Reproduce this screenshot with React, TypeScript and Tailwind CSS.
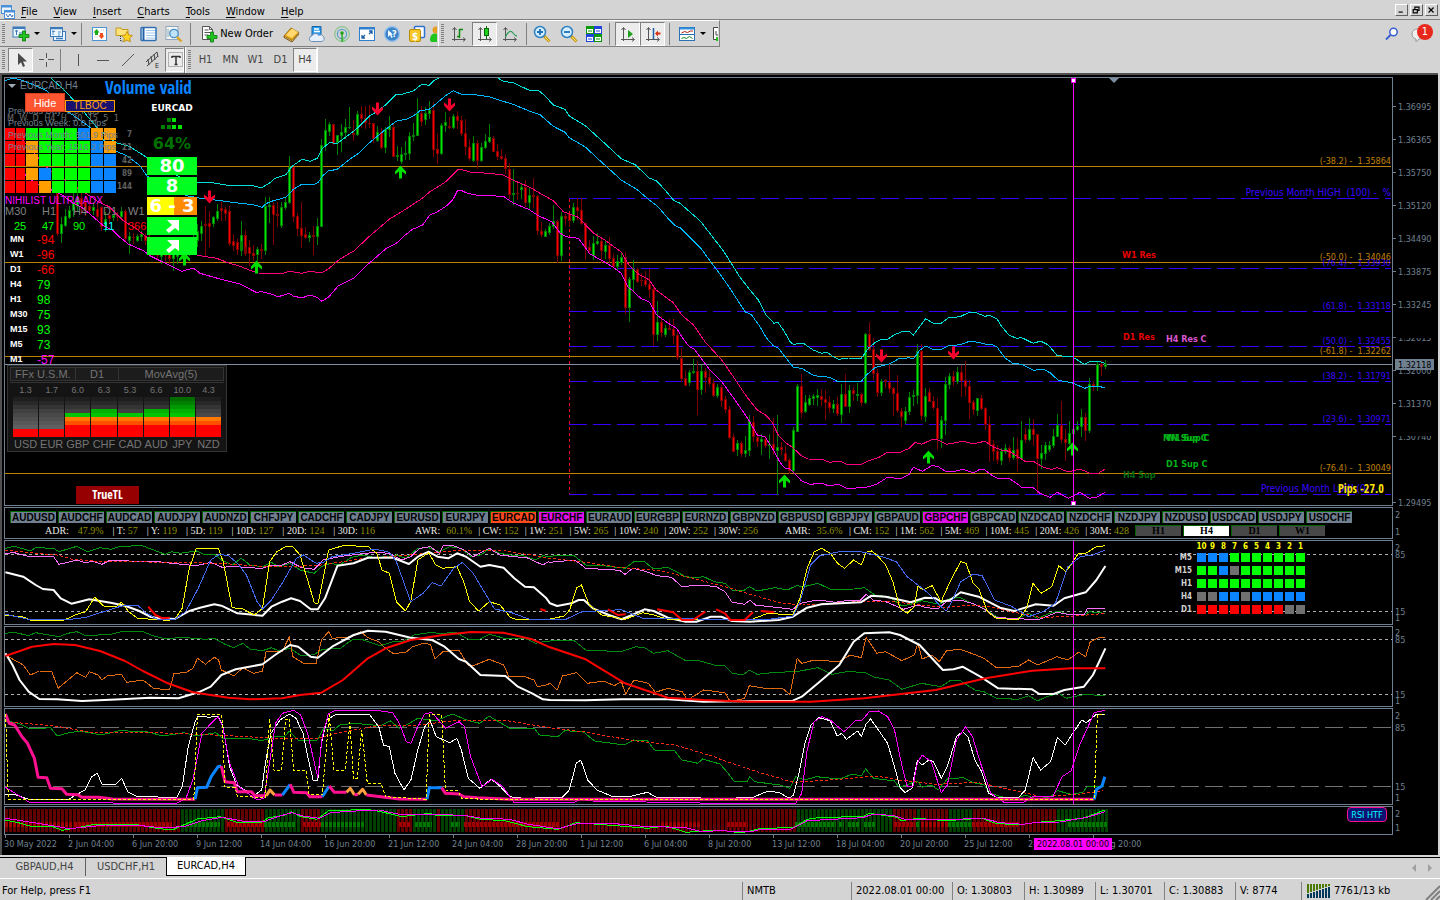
import React from "react";

type Tile = { x: number; y: number; sx: number; sy: number };
type Part = [Tile, string];

const LEFT: Tile = { x: 0, y: 74, sx: 3, sy: 3 };
const MID: Tile = { x: 240, y: 74, sx: 3, sy: 3 };
const RIGHT: Tile = { x: 620, y: 290, sx: 3, sy: 3 };
const OSC_A: Tile = { x: 0, y: 505, sx: 2.8, sy: 3 };
const OSC_B: Tile = { x: 550, y: 505, sx: 2.8, sy: 3 };
const LOW_A: Tile = { x: 0, y: 700, sx: 2.178, sy: 3 };
const LOW_B: Tile = { x: 720, y: 700, sx: 2.178, sy: 3 };

function place([t, pts]: Part) {
  return pts
    .trim()
    .split(/\s+/)
    .map((p) => {
      const [a, b] = p.split(",").map(Number);
      return `${(t.x + a / t.sx).toFixed(1)},${(t.y + b / t.sy).toFixed(1)}`;
    })
    .join(" ");
}

function Curve({ parts, color, w = 1, dash }: { parts: Part[]; color: string; w?: number; dash?: string }) {
  return (
    <polyline
      points={parts.map(place).join(" ")}
      fill="none"
      stroke={color}
      strokeWidth={w}
      strokeDasharray={dash}
      strokeLinejoin="round"
      shapeRendering={w === 1 ? "crispEdges" : "auto"}
    />
  );
}

/* ---------- price data: high,top,bottom,low + direction ---------- */
const candlesLeft =
  "350,357,480,485r 430,450,480,507g 405,425,455,460g 395,408,432,435g 350,385,412,430g 345,370,400,410g 350,372,400,420r 365,385,410,425r 380,395,410,420r 385,398,412,422g 390,405,430,440r 395,400,460,470r 415,435,460,475g 410,422,436,450r 420,424,432,440g 415,424,430,442r 400,412,430,438g 405,410,495,500r 475,485,500,540g 478,488,492,510r 480,487,500,505g 470,480,490,500g 478,486,500,512r 480,500,520,530r 500,510,530,545r 505,525,545,555r 520,530,550,570g 515,528,545,560r 530,540,556,570r 520,535,555,590g 510,530,548,570g 505,520,540,555g 500,515,540,560g 490,505,530,545g 480,490,520,535g 450,470,500,520g 440,455,480,500g 395,450,455,545r 410,448,460,520r 425,430,450,460g 390,410,435,440g 385,402,412,440r 400,405,420,440r 395,410,510,515r 480,500,515,530r 495,505,528,543r 440,500,530,545g 500,503,540,545r";
const candlesMid =
  "477,483,503,536g 468,483,522,543r 498,520,540,575r 513,537,545,560r 520,525,543,560g 510,524,530,555r 368,396,530,543g 368,393,398,447g 384,393,423,513r 384,420,426,459r 384,400,456,461g 370,384,402,408g 246,278,387,390g 278,280,428,444r 417,426,464,486r 384,462,486,521r 459,480,491,495r 474,484,492,503g 456,484,489,543r 432,457,488,513g 195,213,458,460g 135,168,216,231g 144,150,174,186g 150,150,210,213r 183,184,207,243g 150,174,186,234g 135,159,177,195g 99,159,162,165g 138,176,183,201r 111,120,183,186g 96,120,135,162r 96,132,148,165r 93,146,150,162r 147,147,195,207r 156,174,201,204g 162,174,222,226r 159,165,222,237g 126,155,168,189g 150,160,248,249r 216,244,249,261g 219,240,264,270g 201,236,243,258g 174,185,240,258g 147,182,189,201g 72,118,185,186g 96,117,144,156r 99,117,138,153g 81,108,120,135g 84,108,227,249r 180,225,240,270r 147,153,240,243g 114,144,156,174g 129,156,163,165r 120,126,162,165g 111,126,140,165r 126,138,180,186r 135,176,220,243r 195,219,255,261r 186,207,261,264g 198,207,261,285r 207,219,261,264g 180,201,222,225g 150,190,204,207g 186,192,234,235r 210,231,249,258r 225,246,256,258r 240,252,286,300r 267,285,363,375r 285,357,363,393g 324,357,360,378r 330,339,347,375g 318,340,387,399r 342,363,387,405g 312,364,369,402r 363,366,472,483r 444,471,484,489r 465,471,488,489g 447,456,477,483g 393,441,459,465g 438,441,546,567r 414,426,546,561g 420,426,435,456r 420,421,441,459r 387,399,441,447g 372,399,411,438r 372,408,450,452r 444,447,522,558r 498,519,531,540r 486,507,546,558g 477,501,510,513g 489,501,531,567r 501,513,534,555g 489,513,555,567r 540,552,579,582r 543,561,579,591g 534,549,567,573g 534,549,702,720r 609,615,702,744g 558,585,618,654g 582,585,624,627r 597,618,621,636r 591,618,633,639r 585,630,648,672r 639,645,783,816r 681,744,783,801g 726,744,777,789r 753,762,783,789g 735,762,768,768r 735,765,786,810r 765,783,852,858r";
const candlesRight =
  "174,203,267,276r 240,264,288,288r 240,246,279,288g 207,244,249,252g 213,244,299,375r 225,243,300,315g 234,243,264,309r 240,261,282,288r 267,279,318,320r 282,291,318,324g 285,291,333,351r 318,327,360,369r 348,357,444,447r 432,441,486,486r 450,459,480,498g 453,459,492,500r 438,480,492,500g 375,393,483,498g 378,396,441,456r 426,440,456,471r 432,447,456,495g 438,448,468,474r 432,462,467,507g 384,462,480,495r 375,471,483,614g 456,471,480,495r 468,489,513,516r 504,510,543,552r 411,420,543,546g 282,288,426,426g 252,289,369,384r 315,336,366,369g 315,324,345,347g 312,318,327,345g 297,315,323,348g 297,318,330,347r 300,327,339,390r 318,336,354,369r 330,342,357,369g 321,342,372,378r 282,312,375,399g 252,312,350,351r 285,300,350,369g 291,300,312,333r 279,312,318,333g 309,312,339,348r 129,132,339,342g 96,132,180,183r 144,177,252,270r 237,249,309,321r 267,273,309,318g 267,269,276,294r 222,276,297,309r 291,294,312,378r 255,309,363,369r 354,363,381,411r 351,363,393,402g 306,321,366,375g 300,315,321,348g 162,183,318,342g 162,183,378,390r 294,318,381,396g 294,306,336,336r 318,333,354,360r 324,354,447,480r 378,390,447,474g 261,282,393,435g 249,258,285,297g 243,258,276,288r 231,246,276,282g 225,246,273,321r 213,270,291,318r 270,288,339,387r 330,336,360,375r 324,324,363,378g 315,324,357,360r 351,354,405,420r 378,402,465,516r 450,462,486,513r 465,483,510,522r 474,483,513,525g 462,474,486,492g 468,474,504,516r 441,480,504,510g 444,477,507,543r 393,450,507,510g 414,432,450,459r 384,417,450,453g 387,417,435,468r 432,432,507,612r 465,489,507,537g 456,465,492,510g 453,465,480,486g 417,438,468,474g 372,405,441,441g 333,405,450,459r 417,447,459,513r 393,429,462,465g 417,417,432,441g 393,408,420,423g 357,381,411,441g 369,381,423,453r 264,282,423,429g 273,282,291,303r 216,222,291,303g 210,222,231,258r 210,222,231,237g";

function Candles({ data, x0, y0 }: { data: string; x0: number; y0: number }) {
  return (
    <g shapeRendering="crispEdges">
      {data.split(" ").map((c, i) => {
        const up = c.endsWith("g");
        const [h, t, b, l] = c.slice(0, -1).split(",").map((v) => Math.round(y0 + Number(v) / 3));
        const x = x0 + i * 4;
        const height = Math.max(b - t, 1);
        return (
          <g key={i}>
            <rect x={x} y={h} width={1} height={Math.max(l - h, 1)} fill={up ? "#008000" : "#800000"} />
            <rect x={x - 1} y={t} width={3} height={height} fill={up ? "#008000" : "#800000"} />
            {height > 2 && <rect x={x} y={t + 1} width={1} height={height - 2} fill={up ? "#00e600" : "#ff0000"} />}
          </g>
        );
      })}
    </g>
  );
}

const TAHOMA = "font-['DejaVu_Sans_Condensed','DejaVu_Sans',sans-serif]";
const ARIAL = "font-['Liberation_Sans',Arial,sans-serif]";
const NARROW = "font-['Open_Sans_Condensed','Roboto_Condensed','Liberation_Sans',sans-serif]";

const gold = "#c08000";
const indigo = "#3a00ff";
const slate = "#708090";

/* ---------- toolbar icons ---------- */
function Ico({ children, w = 16 }: { children: React.ReactNode; w?: number }) {
  return (
    <svg width={w} height="18" viewBox={`0 0 ${w} 18`} fill="none" aria-hidden="true">
      {children}
    </svg>
  );
}
const Axes = () => <path d="M3.5 3v13M1 14.5h13M1.5 5l2-2.500 2 2.500M12 12.500l2.500 2-2.500 2" stroke="#555" />;
const Plus = ({ x, y }: { x: number; y: number }) => (
  <path transform={`translate(${x} ${y})`} d="M3.500 0h3v3.500h3.500v3h-3.500v3.500h-3v-3.500h-3.500v-3h3.500z" fill="#1fc41f" stroke="#0a7a0a" strokeWidth=".8" />
);
const I = {
  newChart: (
    <Ico w={18}>
      <rect x="1" y="2" width="12" height="10" fill="#eaf5ff" stroke="#3a7ab8" />
      <path d="M1 3h12" stroke="#3a7ab8" strokeWidth="2" />
      <path d="M3 6h3M4.500 5v5M7 8h4" stroke="#3a7ab8" />
      <Plus x={7} y={6} />
    </Ico>
  ),
  profiles: (
    <Ico w={18}>
      <rect x="4.500" y="6.500" width="12" height="9" fill="#eaf5ff" stroke="#3a7ab8" />
      <rect x="1.500" y="2.500" width="12" height="9" fill="#eaf5ff" stroke="#3a7ab8" />
      <path d="M1 3.500h13M7 13.500h7" stroke="#3a7ab8" strokeWidth="1.500" />
      <path d="M4 5v5M3 6.500h3M10 8v3M12 7h-3" stroke="#5b93c6" />
    </Ico>
  ),
  market: (
    <Ico>
      <rect x="1.500" y="2.500" width="14" height="13" fill="#fff" stroke="#4a94d8" />
      <path d="M5.500 4l3 3.500h-1.500v2.500h-3V7.500H2.500z" fill="#18a818" />
      <path d="M10.500 14l3-3.500h-1.500V8h-3v2.500H7.500z" fill="#f05020" />
      <path d="M10 5h3M3.500 12h3" stroke="#bbb" strokeDasharray="1 1" />
    </Ico>
  ),
  navigator: (
    <Ico w={18}>
      <path d="M1 3h5l1 1.500h6v6H1z" fill="#ffe27a" stroke="#c09a20" />
      <path d="M5.500 11v5h3" stroke="#333" strokeDasharray="1 1" />
      <path d="M12 6.500l1.700 3.500 3.800.5-2.800 2.600.7 3.800-3.400-1.800-3.400 1.800.7-3.800L6.500 10.500l3.800-.5z" fill="#ffd21f" stroke="#b8860b" strokeWidth=".8" />
    </Ico>
  ),
  terminal: (
    <Ico w={17}>
      <rect x="1" y="2.500" width="15" height="13" rx="1" fill="#fff" stroke="#2c6fb4" strokeWidth="1.500" />
      <path d="M3.500 3v12" stroke="#1f5fa8" strokeWidth="2" />
      <path d="M6 5.500h9M6 8h9M6 10.500h9M6 13h9" stroke="#9ec8f0" />
    </Ico>
  ),
  tester: (
    <Ico w={18}>
      <rect x="1" y="1.500" width="12" height="13" fill="#f6f6f6" stroke="#8fa6bd" />
      <path d="M3 4v8M5 6v5M10 4v5" stroke="#8aa" />
      <circle cx="9" cy="8.500" r="4.200" fill="#bfe3fa" stroke="#4a8fc6" strokeWidth="1.300" />
      <path d="M12 12l4.500 4.500" stroke="#d8a520" strokeWidth="2.400" />
    </Ico>
  ),
  order: (
    <Ico w={18}>
      <path d="M2.500 1.500h7l3 3v10h-10z" fill="#fff" stroke="#555" />
      <path d="M9.500 1.500v3h3M4.500 5h4M4.500 7.500h6M4.500 10h4" stroke="#555" />
      <Plus x={7} y={7} />
    </Ico>
  ),
  book: (
    <Ico w={18}>
      <path d="M1 11l7-8 8 4.500-7 8z" fill="#e8a818" stroke="#8a5a00" strokeWidth=".8" />
      <path d="M3 10l6-6.500 6 3.500-6 6z" fill="#ffd870" />
      <path d="M1 11v1.500l8 4.500 7-8" stroke="#8a5a00" />
    </Ico>
  ),
  cloud: (
    <Ico w={18}>
      <path d="M4 1.500h9v10H4z" fill="#2e9cf0" stroke="#1565a8" />
      <path d="M6 4h5M6 6.500h6" stroke="#fff" strokeWidth="1.500" />
      <path d="M3.500 16.500a2.800 2.800 0 01.3-5.500 4 4 0 017-.7 3.200 3.200 0 013.500 6.200z" fill="#e6effa" stroke="#6d8db5" />
    </Ico>
  ),
  signal: (
    <Ico w={18}>
      <circle cx="9" cy="9" r="7.300" stroke="#8cc48c" strokeWidth="1.200" />
      <circle cx="9" cy="9" r="4.600" stroke="#5aa0c8" strokeWidth="1.300" />
      <path d="M9 8l3 9H9z" fill="#7ccf7c" />
      <circle cx="9" cy="8" r="1.800" fill="#1fa01f" />
      <path d="M9 9v8" stroke="#1fa01f" strokeWidth="1.200" />
    </Ico>
  ),
  full: (
    <Ico w={18}>
      <rect x="1.500" y="2.500" width="15" height="13" fill="#fff" stroke="#2f7fd0" />
      <path d="M1.500 3.500h15" stroke="#2f7fd0" strokeWidth="2" />
      <path d="M4 13l3-3M4 10v3h3M14 6l-3 3M11 6h3v3" stroke="#1f5fa8" strokeWidth="1.300" />
    </Ico>
  ),
  help: (
    <Ico w={18}>
      <circle cx="9" cy="9" r="7.500" fill="#3d86cc" stroke="#9cc4ea" strokeWidth="1.500" />
      <path d="M5 5v7l2-2 1.500 3 1.200-.7L8.300 9.500H10z" fill="#fff" />
      <text x="9" y="12" fontSize="9" fontWeight="bold" fill="#fff">?</text>
    </Ico>
  ),
  dollar: (
    <Ico w={18}>
      <rect x="6.500" y="1.500" width="10" height="11" rx="1" fill="#fff" stroke="#2f6fd0" strokeWidth="1.500" />
      <rect x="1.500" y="4.500" width="11" height="12" rx="1.500" fill="#f6c828" stroke="#b88a00" />
      <text x="4" y="14.500" fontSize="10" fontWeight="bold" fill="#fff">$</text>
    </Ico>
  ),
  person: (
    <Ico w={7}>
      <circle cx="6" cy="5" r="3.500" fill="#e8a020" />
      <path d="M0 15a5 6 0 017-6v8H1z" fill="#1fc41f" />
    </Ico>
  ),
  bars: <Ico><Axes /><path d="M8.500 4v9M6 11.500h2.500M8.500 4.500H12" stroke="#0a8a0a" strokeWidth="1.500" /></Ico>,
  candle: <Ico><Axes /><path d="M9.500 1v13" stroke="#0a6a0a" /><rect x="7.500" y="3.500" width="4" height="7" fill="#1fd01f" stroke="#0a6a0a" /></Ico>,
  line: <Ico><Axes /><path d="M3.500 12C6 6 9 5 11 8s3 3 4 3" stroke="#2fa05a" strokeWidth="1.300" /></Ico>,
  zoomIn: (
    <Ico w={18}>
      <path d="M11 11l5.500 5.500" stroke="#c89a10" strokeWidth="3" /><path d="M12 12l4 4" stroke="#ffe26a" />
      <circle cx="7" cy="7" r="5.500" fill="#d4efff" stroke="#2f7fc0" strokeWidth="1.500" /><path d="M4 7h6M7 4v6" stroke="#1f6fb4" strokeWidth="1.800" />
    </Ico>
  ),
  zoomOut: (
    <Ico w={18}>
      <path d="M11 11l5.500 5.500" stroke="#c89a10" strokeWidth="3" /><path d="M12 12l4 4" stroke="#ffe26a" />
      <circle cx="7" cy="7" r="5.500" fill="#d4efff" stroke="#2f7fc0" strokeWidth="1.500" /><path d="M4 7h6" stroke="#1f6fb4" strokeWidth="1.800" />
    </Ico>
  ),
  tiles: (
    <Ico w={18}>
      {[[1, 1, "#0a9a0a"], [9, 1, "#2244dd"], [1, 9, "#2244dd"], [9, 9, "#0a9a0a"]].map(([x, y, c], i) => (
        <g key={i}>
          <rect x={x as number} y={y as number} width="8" height="8" fill={c as string} />
          <rect x={(x as number) + 1} y={(y as number) + 3} width="6" height="4" fill="#fff" />
          <path d={`M${(x as number) + 2} ${(y as number) + 5}h4`} stroke={c as string} />
        </g>
      ))}
    </Ico>
  ),
  scroll: <Ico><Axes /><path d="M8 5l5 4-5 4z" fill="#1fa01f" /></Ico>,
  shift: <Ico><Axes /><path d="M8.500 3v11" stroke="#1f5fa8" strokeWidth="1.500" /><path d="M10 8.500l3-3v2h2.500v2H13v2z" fill="#d83010" /></Ico>,
  indicators: (
    <Ico w={18}>
      <rect x="1.500" y="2.500" width="15" height="13" fill="#fff" stroke="#2f6fb4" /><path d="M1.500 3.500h15" stroke="#2f8fe0" strokeWidth="2" />
      <path d="M2 9.500h14" stroke="#2f6fb4" /><path d="M3.500 8l3-1.500 3 1 3-1.500H15" stroke="#b02010" /><path d="M3.500 13.500l2.500-1 2.500 1 3-2 3 2" stroke="#109020" />
    </Ico>
  ),
  template: <Ico w={6}><path d="M6 2.500H1.500v12H6" fill="#fff" stroke="#444" /><path d="M4 6v4h2" stroke="#444" /><rect x="4" y="12" width="2" height="4" fill="#1fc41f" /></Ico>,
  cursor: <Ico><path d="M5 2v12l3-2.700 2 4.700 2-1-2-4.500h4z" fill="#4a4a4a" /></Ico>,
  cross: <Ico><path d="M8 1.500v5.500M8 10.500V16M.5 8.500H6M10 8.500h5.500" stroke="#555" shapeRendering="crispEdges" /></Ico>,
  vline: <Ico><path d="M8.500 3v12" stroke="#555" shapeRendering="crispEdges" /></Ico>,
  hline: <Ico><path d="M2 9.500h12" stroke="#555" shapeRendering="crispEdges" /></Ico>,
  trend: <Ico><path d="M2 15L14 3" stroke="#555" /></Ico>,
  channel: (
    <Ico>
      <path d="M1 11L12 1M2 15L13 5M3 8l1 6M6 5l1 6M9 3l1 6M12 1l1 5" stroke="#444" />
      <text x="10" y="17" fontSize="7" fill="#222">E</text>
    </Ico>
  ),
  label: (
    <Ico>
      <rect x="1.500" y="1.500" width="14" height="14" stroke="#777" strokeDasharray="1 1" /><path d="M5 5.500h8M9 5v9M7.500 13.500h3M5 5v2M13 5v2" stroke="#333" strokeWidth="1.500" />
    </Ico>
  ),
};

const Grip = () => <span className="mx-[2px] h-5 w-[3px] shrink-0 bg-[repeating-linear-gradient(#808080_0_1px,#d4d4d4_1px_2px)]" />;
const Sep = () => <span className="h-[22px] w-px shrink-0 bg-[#808080]" />;
const Caret = () => <span className="h-0 w-0 border-x-[3px] border-t-[3px] border-x-transparent border-t-black" />;

function Tool({ label, pressed, children, caret, cls = "w-[25px]" }: { label: string; pressed?: boolean; children: React.ReactNode; caret?: boolean; cls?: string }) {
  return (
    <button
      aria-label={label}
      className={`${cls} flex h-6 shrink-0 items-center justify-center gap-1 overflow-hidden ${
        pressed ? "border border-[#808080] border-r-white border-b-white bg-[#ececec]" : ""
      }`}
    >
      {children}
      {caret && <Caret />}
    </button>
  );
}

function MenuBar() {
  const items: [string, string][] = [
    ["File", "ml-[5px]"], ["View", "ml-4"], ["Insert", "ml-4"], ["Charts", "ml-4"], ["Tools", "ml-4"], ["Window", "ml-4"], ["Help", "ml-4"],
  ];
  return (
    <header className="flex h-[19px] items-center pt-1">
      <svg width="16" height="16" viewBox="0 0 16 16" fill="none" aria-hidden="true">
        <rect x="1.500" y="1.500" width="10" height="8" fill="#eaf5ff" stroke="#4a90d8" />
        <rect x="4.500" y="6.500" width="10" height="8" fill="#fff" stroke="#4a90d8" />
        <path d="M1 2.500h11M4 7.500h11" stroke="#4a90d8" strokeWidth="2" />
        <path d="M6 10l2 3 2-3 2 3 1-2" stroke="#3070c0" />
      </svg>
      <nav className="flex">
        {items.map(([t, m]) => (
          <button key={t} className={m}>
            <span className="underline underline-offset-2">{t[0]}</span>
            {t.slice(1)}
          </button>
        ))}
      </nav>
      <div className="mr-[2px] mb-1 ml-auto flex gap-[2px]">
        {["M2 8.500h5", "M3.500 5v-2.500h5v4H7M1.500 5.500h5v4h-5z", "M2 3l6 6M8 3l-6 6"].map((d, i) => (
          <button key={i} aria-label={["Minimize", "Restore", "Close"][i]} className="h-[12px] w-[13px] border border-white border-r-[#606060] border-b-[#606060]">
            <svg width="11" height="10" viewBox="0 0 11 12" aria-hidden="true"><path d={d} fill="none" stroke="#000" strokeWidth="1.400" /></svg>
          </button>
        ))}
      </div>
    </header>
  );
}

function Toolbars() {
  return (
    <>
      <div className="flex h-[28px] items-center border-t border-[#808080]">
        <div className="flex h-[27px] items-center border-t border-r border-b border-white border-b-[#808080]">
          <Grip />
          <Tool label="New chart" caret cls="w-[37px]">{I.newChart}</Tool>
          <Tool label="Profiles" caret cls="w-[37px]">{I.profiles}</Tool>
          <Sep />
          <span className="w-[4px]" />
          <Tool label="Market watch">{I.market}</Tool>
          <Tool label="Navigator">{I.navigator}</Tool>
          <Tool label="Terminal">{I.terminal}</Tool>
          <Tool label="Strategy tester">{I.tester}</Tool>
          <span className="w-[4px]" />
          <Sep />
          <button className="flex h-6 w-[88px] items-center justify-end gap-[2px] whitespace-nowrap pr-[6px]">{I.order}New Order</button>
          <Tool label="MetaEditor">{I.book}</Tool>
          <Tool label="Hosting">{I.cloud}</Tool>
          <Tool label="Signals">{I.signal}</Tool>
          <Tool label="Full screen">{I.full}</Tool>
          <Tool label="Help">{I.help}</Tool>
          <Tool label="Market">{I.dollar}</Tool>
          <Tool label="Auto trading" cls="w-[9px]">{I.person}</Tool>
        </div>
        <div className="flex h-[27px] items-center border-t border-r border-b border-white border-r-[#808080] border-b-[#808080]">
          <Grip />
          <Tool label="Bar chart" cls="w-[26px]">{I.bars}</Tool>
          <Tool label="Candlesticks" pressed>{I.candle}</Tool>
          <Tool label="Line chart">{I.line}</Tool>
          <span className="w-1" />
          <Sep />
          <Tool label="Zoom in" cls="w-[29px]">{I.zoomIn}</Tool>
          <Tool label="Zoom out">{I.zoomOut}</Tool>
          <Tool label="Tile windows">{I.tiles}</Tool>
          <span className="w-[3px]" />
          <Sep />
          <span className="w-[5px]" />
          <Tool label="Auto scroll" pressed>{I.scroll}</Tool>
          <Tool label="Chart shift" pressed>{I.shift}</Tool>
          <span className="w-1" />
          <Sep />
          <span className="w-[3px]" />
          <Tool label="Indicators" caret cls="w-[37px]">{I.indicators}</Tool>
          <Tool label="Templates" cls="w-[9px]">{I.template}</Tool>
        </div>
        <div className="ml-auto flex items-center gap-3 pr-[7px]">
          <button aria-label="Search">
            <svg width="14" height="14" viewBox="0 0 14 14" fill="none"><circle cx="8.500" cy="5" r="3.700" fill="#fff" stroke="#3a5fd0" strokeWidth="1.500" /><path d="M5.500 8L1 12.500" stroke="#3a5fd0" strokeWidth="2" /></svg>
          </button>
          <button aria-label="Notifications" className="relative h-[22px] w-[22px]">
            <svg width="22" height="22" viewBox="0 0 22 22" fill="none"><path d="M1 11c0-3 2-5 6-5s7 2 7 5-3 5-6 5l-3 3v-3c-3-1-4-2-4-5z" fill="#eee" stroke="#999" /></svg>
            <span className="absolute top-[1px] right-0 flex h-4 w-4 items-center justify-center rounded-full bg-[#e8281c] text-[11px] text-white">1</span>
          </button>
        </div>
      </div>
      <div className="flex h-[26px] items-center text-[#444]">
        <div className="flex h-[26px] items-center border-r border-[#808080]">
          <Grip />
          <span className="w-px" />
          <Tool label="Cursor" pressed>{I.cursor}</Tool>
          <Tool label="Crosshair">{I.cross}</Tool>
          <span className="w-[2px]" />
          <Sep />
          <span className="w-1" />
          <Tool label="Vertical line">{I.vline}</Tool>
          <Tool label="Horizontal line">{I.hline}</Tool>
          <Tool label="Trendline">{I.trend}</Tool>
          <Tool label="Equidistant channel">{I.channel}</Tool>
          <Tool label="Text label" pressed cls="w-[19px]">{I.label}</Tool>
        </div>
        <div className="flex h-[26px] items-center border-r border-l border-white">
          <Grip />
          {["H1", "MN", "W1", "D1"].map((t) => (
            <button key={t} className="h-6 w-[25px] text-[11px]">{t}</button>
          ))}
          <button className="h-6 w-[24px] border border-[#808080] border-r-white border-b-white bg-[#ececec] text-[11px]">H4</button>
        </div>
      </div>
    </>
  );
}

/* ---------- panes ---------- */
const Levels = ({ ys, dash, color }: { ys: number[]; dash: string; color: string }) => (
  <g shapeRendering="crispEdges">
    {ys.map((y) => (
      <line key={y} x1={5} x2={1392} y1={y + 0.5} y2={y + 0.5} stroke={color} strokeDasharray={dash} />
    ))}
  </g>
);
const Crosshair = ({ y1, y2 }: { y1: number; y2: number }) => <line x1={1073.5} x2={1073.5} y1={y1} y2={y2} stroke="#ff00ff" shapeRendering="crispEdges" />;

function Pane({ top, cls, ticks, children, overlay }: { top: number; cls: string; ticks: [number, string][]; children?: React.ReactNode; overlay?: React.ReactNode }) {
  return (
    <section className={`${cls} flex`}>
      <div className="relative min-w-0 flex-1 overflow-hidden border border-[#708090]">
        <svg className={`${TAHOMA} block h-full w-full`} aria-hidden={children ? undefined : true}>
          <g transform={`translate(-5 ${-(top + 1)})`}>{children}</g>
        </svg>
        {overlay}
      </div>
      <svg className={`${TAHOMA} h-full w-[45px] overflow-visible text-[9px]`}>
        <g transform={`translate(-1393 ${-top})`} fill={slate}>
          {ticks.map(([y, t]) => (
            <text key={t} x={top === 77 ? 1398 : 1395} y={y + 4}>{t}</text>
          ))}
          {top === 77 && (
            <>
              {ticks.map(([y]) => <rect key={y} x={1393} y={y} width={3} height={1} />)}
              <rect x={1397} y={333} width={36} height={5} fill="#000" />
              <rect x={1397} y={432} width={36} height={4} fill="#000" />
              <rect x={1395} y={359} width={39} height={11} />
              <text x={1398} y={368} fill="#000">1.32118</text>
            </>
          )}
        </g>
      </svg>
    </section>
  );
}

const DownArrow = ({ x, y }: { x: number; y: number }) => (
  <path transform={`translate(${x} ${y})`} d="M-1.500 -7h3v7l4-3v3l-5.500 6-5.500-6v-3l4 3z" fill="#f5002c" />
);
const UpArrow = ({ x, y }: { x: number; y: number }) => (
  <path transform={`translate(${x} ${y})`} d="M-1.500 7h3v-7l4 3v-3l-5.500-6-5.500 6v3l4-3z" fill="#00e000" />
);

const fibs: [number, string, string][] = [
  [166, "(-38.2) -\u00a0\u00a01.35864", gold],
  [268, "(76.4) -\u00a0\u00a01.33930", indigo],
  [262, "(-50.0) -\u00a0\u00a01.34046", gold],
  [311, "(61.8) -\u00a0\u00a01.33118", indigo],
  [346, "(50.0) -\u00a0\u00a01.32455", indigo],
  [356, "(-61.8) -\u00a0\u00a01.32262", gold],
  [381, "(38.2) -\u00a0\u00a01.31791", indigo],
  [424, "(23.6) -\u00a0\u00a01.30971", indigo],
  [473, "(-76.4) -\u00a0\u00a01.30049", gold],
];

function PriceChart() {
  return (
    <>
      <g shapeRendering="crispEdges">
        {[198, 268, 311, 346, 381, 424, 494].map((y) => (
          <line key={y} x1={569} x2={1391} y1={y + 0.5} y2={y + 0.5} stroke={indigo} strokeDasharray="18 6" />
        ))}
        <line x1={569.5} x2={569.5} y1={199} y2={494} stroke="#ff0020" strokeDasharray="3 3" />
        {[166, 262, 356, 473].map((y) => (
          <line key={y} x1={5} x2={1391} y1={y + 0.5} y2={y + 0.5} stroke={gold} />
        ))}
        <line x1={5} x2={1392} y1={364.5} y2={364.5} stroke="#8090a4" />
      </g>
      <Candles data={candlesLeft} x0={57} y0={74} />
      <Candles data={candlesMid} x0={241} y0={74} />
      <Candles data={candlesRight} x0={681} y0={290} />
      <Curve color="#00e0d8" parts={[[LEFT, "150,10 195,50 240,100 290,160 345,205 390,218 440,250 500,290 560,318 597,325 630,325 660,330 690,335 720,334"], [MID, "35,334 64,342 90,326 103,314 138,302 155,278 185,256 210,262 232,253 246,225 268,206 292,208 330,180 355,160 390,125 412,112 438,92 470,60 488,60 520,51 545,31 568,34 582,20 597,12 640,-20 740,-15 773,12 790,22 822,27 868,49 895,49 915,65 940,93 975,106 988,126 1036,155 1080,195 1144,254 1185,272 1228,312 1250,321 1275,348 1300,378 1320,388 1380,440 1450,530 1500,610"], [RIGHT, "390,0 415,30 438,75 462,100 474,97 492,123 510,155 520,163 550,160 580,180 605,190 620,186 640,200 655,208 685,204 724,205 745,175 765,158 785,148 800,150 825,133 850,124 868,124 880,136 895,115 917,86 940,100 962,101 985,84 1020,80 1050,66 1070,69 1095,79 1110,76 1132,88 1145,110 1168,136 1190,145 1205,143 1240,160 1262,153 1285,165 1312,197 1357,200 1380,215 1394,223 1410,214 1435,214 1455,220"]]} />
      <Curve color="#00b8ff" parts={[[LEFT, "15,20 40,12 70,20 100,32 140,50 200,110 270,160 345,230 380,245 420,275 440,305 500,345 560,365 597,372 645,378 720,388"], [MID, "40,392 66,400 80,388 100,380 138,370 160,346 185,331 218,333 234,326 248,305 265,291 292,286 330,255 360,235 390,205 430,172 468,142 500,135 520,126 540,110 568,106 590,88 615,66 640,50 662,60 690,60 748,68 790,82 822,92 868,111 900,122 940,157 975,175 988,191 1036,219 1080,260 1144,318 1190,346 1228,378 1252,396 1285,434 1305,455 1320,461 1380,520 1440,600"], [RIGHT, "333,0 375,65 395,75 420,110 440,145 460,167 475,174 520,232 545,235 582,257 630,262 655,276 724,274 740,254 765,233 790,226 808,222 835,207 868,203 880,207 900,180 917,168 935,177 965,177 985,168 1020,164 1045,155 1065,155 1100,163 1118,164 1132,172 1155,204 1178,220 1205,223 1240,241 1270,238 1290,248 1315,271 1355,278 1395,295 1405,290 1440,290 1455,293"]]} />
      <Curve color="#ff0080" parts={[[LEFT, "60,190 150,290 245,350 290,380 330,400 370,440 410,465 440,490 520,525 600,545 650,553 680,565 720,577"], [MID, "25,587 55,597 80,598 123,600 148,592 185,598 210,592 245,597 265,585 300,555 343,530 385,490 450,434 485,413 545,374 570,353 615,325 655,286 670,288 690,294 745,298 790,303 830,323 868,339 900,358 940,380 970,413 990,421 1015,430 1060,477 1090,495 1120,517 1144,534 1165,570 1190,597 1228,618"], [RIGHT, "108,0 160,38 185,75 220,104 255,155 305,210 340,260 380,320 412,360 438,376 455,395 475,435 495,457 515,470 545,498 565,507 605,508 630,517 660,513 680,523 725,523 745,512 775,503 800,488 840,487 868,475 885,457 905,463 937,448 955,450 980,463 1028,454 1060,461 1095,454 1118,470 1144,480 1168,484 1215,514 1240,514 1270,532 1295,538 1312,533 1345,546 1380,537 1410,550 1435,550 1455,537"]]} />
      <Curve color="#ff00ff" parts={[[LEFT, "60,290 110,330 160,350 190,365 215,385 245,400 270,420 310,455 340,470 360,490 385,510 430,530 450,545 480,560 520,580 545,592 580,582 600,598 660,615 720,630"], [MID, "48,655 65,653 90,659 115,668 147,658 160,666 185,672 210,663 232,670 245,682 266,669 295,635 343,611 385,570 440,522 470,507 490,488 515,467 548,453 570,422 590,415 620,395 640,375 652,351 663,349 680,357 712,364 790,367 820,387 868,407 895,425 935,443 960,477 978,488 1015,493 1050,540 1090,562 1120,580 1144,598 1165,640"], [RIGHT, "36,0 62,25 88,36 110,75 145,100 170,115 185,140 208,170 222,176 270,240 305,275 345,330 385,388 412,435 435,440 460,480 480,517 495,535 510,537 545,573 570,583 605,580 628,588 655,582 680,595 735,593 770,583 800,563 845,565 868,553 880,532 907,544 937,526 955,530 975,543 1000,545 1028,538 1060,548 1080,538 1095,540 1118,558 1132,565 1168,566 1190,580 1205,592 1240,593 1260,610 1290,622 1312,607 1345,625 1380,607 1408,625 1430,622 1455,607"]]} />
      {[[377, 109], [449, 105], [881, 356], [953, 353], [209, 197]].map(([x, y]) => <DownArrow key={x} x={x + 0.5} y={y + 0.5} />)}
      {[[400, 171], [256, 266], [784, 480], [928, 456], [1072, 448], [184, 258]].map(([x, y]) => <UpArrow key={x} x={x + 0.5} y={y + 0.5} />)}
      <Crosshair y1={78} y2={505} />
      <rect x={1071.500} y={78.500} width={4} height={4} fill="#fff" stroke="#ff00ff" />
      <rect x={1071.500} y={501.500} width={4} height={4} fill="#fff" stroke="#ff00ff" />
      <path d="M1109 78h10l-5 5z" fill="#8090a4" />
      <g fontSize="9">
        {fibs.map(([y, t, c]) => (
          <text key={t} x={1391} y={y - 2} textAnchor="end" fill={c}>{t}</text>
        ))}
      </g>
      <g fontSize="10" fill={indigo}>
        <text x={1391} y={196} textAnchor="end">{"Previous Month HIGH\u00a0\u00a0(100) -\u00a0\u00a0%"}</text>
        <text x={1261} y={492}>Previous Month LOW (0) -</text>
      </g>
      <g fontSize="9" fontWeight="bold">
        <text x={1122} y={258} fill="#e60000">W1 Res</text>
        <text x={1123} y={340} fill="#e60000">D1 Res</text>
        <text x={1166} y={342} fill="#da55d0">H4 Res C</text>
        <text x={1163} y={441} fill="#00b418">MN Sup C</text>
        <text x={1166} y={441} fill="#00b418">W1 Sup C</text>
        <text x={1166} y={467} fill="#00b418">D1 Sup C</text>
        <text x={1123} y={478} fill="#006e10">H4 Sup</text>
      </g>
      <text className={NARROW} x={1338} y={493} fontSize="12" fontWeight="bold" fill="#ffe600">Pips -27.0</text>
    </>
  );
}

const R = "bg-[#ff0000]";
const G = "bg-[#00ff00]";
const B = "bg-[#0a84ff]";
const O = "bg-[#ff9f00]";
const X = "bg-[#707070]";

const trendGrid = [
  [R, R, G, G, G, G, B, O, O],
  [R, R, O, G, G, G, G, B, O],
  [R, R, O, G, G, G, G, B, B],
  [R, R, O, B, G, G, G, B, B],
  [R, R, R, O, G, G, G, B, B],
];

const strengths: [string, string, number][] = [
  ["USD", "1.3", 2], ["EUR", "1.7", 2], ["GBP", "6.0", 6], ["CHF", "6.3", 7], ["CAD", "5.3", 6], ["AUD", "6.6", 7], ["JPY", "10.0", 10], ["NZD", "4.3", 5],
];
const lit = ["bg-[#ff0000]", "bg-[#ff0000]", "bg-[#ff0000]", "bg-[#ff5000]", "bg-[#ff7800]", "bg-[#00c400]", "bg-[#00b000]", "bg-[#009800]", "bg-[#008000]", "bg-[#006c00]"];
const unlit = ["bg-[#707070]", "bg-[#686868]", "bg-[#606060]", "bg-[#585858]", "bg-[#505050]", "bg-[#484848]", "bg-[#404040]", "bg-[#343434]", "bg-[#282828]", "bg-[#1e1e1e]"];

function StrengthMeter() {
  return (
    <div className="absolute top-[287px] left-[2px] w-[220px] border border-[#333] bg-[#141414] px-[2px] pt-px text-[11px] leading-[14px] text-[#747474]">
      <div className="flex border border-[#333] bg-[#1c1c1c] leading-[12px]">
        <span className="w-[64px] pl-1 whitespace-nowrap">FFx U.S.M.</span>
        <span className="w-[44px] border-x border-[#333] text-center">D1</span>
        <span className="flex-1 text-center">MovAvg(5)</span>
      </div>
      <div className="mt-px grid grid-cols-8 gap-x-px border-t border-[#333] px-[3px]">
        {strengths.map(([n, v, k]) => (
          <div key={n} className="text-center">
            <div className="text-[9px]">{v}</div>
            <div className="flex flex-col-reverse">
              {lit.map((c, i) => <div key={i} className={`h-1 ${i < k ? c : unlit[i]}`} />)}
            </div>
            <div>{n}</div>
          </div>
        ))}
      </div>
    </div>
  );
}

const adx: [string, string, string, string][] = [
  ["M30", "25", "text-[#00ff00] pl-[9px]", "w-[37px]"],
  ["H1", "47", "text-[#00ff00]", "w-[31px]"],
  ["H4", "90", "text-[#00ff00]", "w-[30px]"],
  ["D1", "11", "text-[#00ffff]", "w-[25px]"],
  ["W1", "366", "text-[#ff0000]", "w-[20px]"],
];
const scores: [string, string, string][] = [
  ["MN", "-94", "text-[#ff0000]"], ["W1", "-96", "text-[#ff0000]"], ["D1", "-66", "text-[#ff0000]"], ["H4", "79", "text-[#00ff00]"], ["H1", "98", "text-[#00ff00]"],
  ["M30", "75", "text-[#00ff00]"], ["M15", "93", "text-[#00ff00]"], ["M5", "73", "text-[#00ff00]"], ["M1", "-57", "text-[#ff00ff]"],
];

const Arrow = () => (
  <svg width="18" height="16" viewBox="0 0 18 16" aria-hidden="true"><path d="M4 2h12v11l-4-3-6 5-3-3 6-5z" fill="#fff" /></svg>
);

function ChartOverlay() {
  return (
    <div className={ARIAL}>
      <div className="absolute top-[1px] left-[3px] flex items-center gap-1 text-[10px] leading-[14px] text-[#708090]">
        <span className="border-x-4 border-t-4 border-x-transparent border-t-[#a0aab4]" />
        EURCAD,H4
      </div>
      <div className={`${NARROW} absolute top-0 left-[100px] text-[17px] leading-5 font-bold whitespace-nowrap text-[#0a84ff]`}>Volume valid</div>

      <div className="absolute top-[50px] left-0 flex">
        <div className="grid grid-cols-[10px_9px_12px_12px_12px_12px_12px_12px_12px] gap-px">
          {trendGrid.flat().map((c, i) => <div key={i} className={`h-3 ${c}`} />)}
        </div>
        <div className={`${TAHOMA} flex w-4 flex-col text-right text-[8px] leading-[13px] font-bold text-[#606060]`}>
          {["7", "21", "42", "89", "144"].map((n) => <span key={n}>{n}</span>)}
        </div>
      </div>
      <div className={`${TAHOMA} absolute top-[35px] left-0 flex w-[114px] justify-between pl-[2px] text-[9px] leading-[11px] text-[#707070]`}>
        {["M", "W", "D", "H4", "H", "30", "15", "5", "1"].map((h) => <span key={h}>{h}</span>)}
      </div>
      <div className={`${ARIAL} absolute top-[27px] left-[3px] text-[9px] leading-3 whitespace-nowrap text-[#708090]`}>
        <div>Previous Day: 0.0 Pips</div>
        <div>Previous Week: 0.0 Pips</div>
        <div>Previous Month: 561.9 Pips</div>
        <div>Previous Year: 1516.2 Pips</div>
      </div>
      <div className="absolute top-[15px] left-[20px] flex items-end">
        <button className="h-[19px] w-10 border border-[#d84020] bg-[#ff5530] text-[11px] leading-[16px] text-white">Hide</button>
        <button className="h-[12px] w-[50px] border border-[#ffa500] bg-[#191070] text-[10px] leading-[10px] text-[#ffa500]">TLBOC</button>
      </div>

      <div className="absolute top-[116px] left-0 text-[10px] leading-[13px] whitespace-nowrap text-[#ff00ff]">NIHILIST ULTRA ADX</div>
      <div className="absolute top-[126px] left-0 flex text-[11px] leading-[15px]">
        {adx.map(([t, v, c, w]) => (
          <div key={t} className={w}>
            <div className="text-[#808080]">{t}</div>
            <div className={c}>{v}</div>
          </div>
        ))}
      </div>
      <div className="absolute top-[154px] left-[5px] grid grid-cols-[27px_auto] leading-[15px] text-white">
        {scores.map(([t, v, c]) => (
          <React.Fragment key={t}>
            <span className="text-[9px] font-bold">{t}</span>
            <span className={`pt-[2px] text-[12px] leading-[13px] ${c}`}>{v}</span>
          </React.Fragment>
        ))}
      </div>

      <div className="absolute top-[25px] left-[142px] flex w-[50px] flex-col items-center font-['DejaVu_Sans',sans-serif] font-bold text-white">
        <span className="text-[9px] leading-[11px]">EURCAD</span>
        <svg className="mt-[4px]" width="22" height="12" aria-hidden="true">
          <path d="M6 0h4v4h-4zM0 7h4v4h-4zM6 7h4v4h-4z" fill="#008000" /><path d="M11 0h4v4h-4zM11 7h4v4h-4zM17 7h4v4h-4z" fill="#00e600" />
        </svg>
        <span className="mt-[5px] text-[16px] leading-[18px] text-[#007000]">64%</span>
        <div className="mt-[4px] flex w-full flex-col gap-[2px] text-[18px] leading-[18px]">
          <div className="h-[18px] bg-[#00ff20] text-center">80</div>
          <div className="h-[18px] bg-[#00ff20] text-center">8</div>
          <div className="h-[18px] bg-[linear-gradient(90deg,#ffff00_0_54%,#ff8c00_54%)] text-center whitespace-nowrap">6 - 3</div>
          <div className="flex h-[18px] items-center justify-center bg-[#00ff20]"><Arrow /></div>
          <div className="flex h-[18px] items-center justify-center bg-[#00ff20]"><Arrow /></div>
        </div>
      </div>

      <StrengthMeter />
      <button className={`${NARROW} absolute top-[408px] left-[71px] h-[18px] w-[63px] bg-[#960000] text-[12px] font-bold text-white`}>TrueTL</button>
    </div>
  );
}

const symbols = "AUDUSD AUDCHF AUDCAD AUDJPY AUDNZD CHFJPY CADCHF CADJPY EURUSD EURJPY EURCAD EURCHF EURAUD EURGBP EURNZD GBPNZD GBPUSD GBPJPY GBPAUD GBPCHF GBPCAD NZDCAD NZDCHF NZDJPY NZDUSD USDCAD USDJPY USDCHF".split(" ");
const ranges: [string, string, string, string[][]][] = [
  ["ADR:", "47.9%", "mr-[40px] w-[330px]", [["T:", "57"], ["Y:", "119"], ["5D:", "119"], ["10D:", "127"], ["20D:", "124"], ["30D:", "116"]]],
  ["AWR:", "60.1%", "mr-[27px] w-[343px]", [["CW:", "152"], ["1W:", "251"], ["5W:", "265"], ["10W:", "240"], ["20W:", "252"], ["30W:", "256"]]],
  ["AMR:", "35.6%", "w-[344px]", [["CM:", "152"], ["1M:", "562"], ["5M:", "469"], ["10M:", "445"], ["20M:", "426"], ["30M:", "428"]]],
];

function SymbolStrip() {
  return (
    <div className="absolute inset-0">
      <div className={`${ARIAL} flex gap-[2px] pt-[3px] pl-[5px] text-[10px] leading-[11px] font-bold text-black`}>
        {symbols.map((s) => (
          <button
            key={s}
            className={`h-[12px] w-[46px] shrink-0 border-t border-l border-[#006400] ${
              s === "EURCAD" ? "bg-[#ff4a20]" : s === "EURCHF" || s === "GBPCHF" ? "bg-[#e010e8]" : "bg-[#708090]"
            }`}
          >
            {s}
          </button>
        ))}
      </div>
      <div className="flex pt-[2px] pl-[40px] font-['Liberation_Serif',serif] text-[10px] leading-[12px] text-[#e8e8e8]">
        {ranges.map(([n, p, w, list]) => (
          <div key={n} className={`flex shrink-0 justify-between whitespace-nowrap ${w}`}>
            <span>{n}</span>
            <span className="text-[#909000]">{p}</span>
            {list.map(([k, v]) => (
              <span key={k}>
                | {k} <span className="text-[#909000]">{v}</span>
              </span>
            ))}
          </div>
        ))}
        <div className="ml-[6px] flex gap-[2px] font-bold text-black">
          {["H1", "H4", "D1", "W1"].map((t) => (
            <button key={t} className={`h-[11px] w-[46px] border-t border-l border-[#006400] leading-[10px] ${t === "H4" ? "bg-white" : "bg-[#484848]"}`}>{t}</button>
          ))}
        </div>
      </div>
    </div>
  );
}

const heat: [string, string[]][] = [
  ["M5", [B, B, B, G, G, G, G, G, G, G]],
  ["M15", [G, G, B, X, G, G, G, G, G, G]],
  ["H1", [G, G, G, G, G, G, G, G, G, G]],
  ["H4", [X, X, B, B, X, B, B, B, B, B]],
  ["D1", [R, R, R, R, R, R, R, R, X, X]],
];

function HeatMap() {
  return (
    <table className={`${TAHOMA} absolute top-0 left-[1165px] border-separate border-spacing-0 text-[8px] font-bold text-[#d0d0d0]`}>
      <thead>
        <tr className="h-[12px] leading-[12px] text-[#ffff00]">
          <th className="w-[26px] p-0" />
          {[10, 9, 8, 7, 6, 5, 4, 3, 2, 1].map((n) => <th key={n} className="w-[11px] p-0">{n}</th>)}
        </tr>
      </thead>
      <tbody>
        {heat.map(([n, cells]) => (
          <tr key={n} className="h-[13px] leading-[9px]">
            <th className="p-0 pr-[4px] pb-1 text-right">{n}</th>
            {cells.map((c, i) => <td key={i} className="p-px pt-0 pb-1"><div className={`h-[9px] w-[9px] ${c}`} /></td>)}
          </tr>
        ))}
      </tbody>
    </table>
  );
}

function Osc1() {
  return (
    <>
      <Levels ys={[554, 611]} dash="3 3" color="#b0b0b0" />
      <Curve color="#009a10" parts={[[OSC_A, "15,130 40,124 85,138 100,128 150,130 165,140 215,124 245,140 280,128 310,133 330,126 395,121 430,135 462,148 480,140 505,145 550,138 575,150 600,147 620,165 650,180 675,160 700,180 735,185 760,172 780,185 812,175 840,195 860,200 880,205 900,185 925,175 950,180 985,157 1015,150 1050,158 1080,155 1110,150 1135,160 1150,148 1170,130 1200,128 1230,140 1260,125 1290,130 1320,155 1345,150 1370,132 1400,145 1430,150 1460,150 1500,165 1520,152"], [OSC_B, "0,155 20,150 65,150 100,180 150,182 210,190 235,170 265,170 290,192 330,187 380,215 410,218 430,215 460,230 490,235 510,255 540,258 558,245 580,258 630,248 665,255 690,242 710,245 750,235 790,255 850,252 880,248 910,270 950,275 985,303 1010,298 1040,287 1090,298 1120,280 1150,278 1180,295 1215,310 1250,335 1300,345 1340,325 1365,340 1400,325 1425,318 1450,328 1500,328 1510,320 1555,325"]]} />
      <Curve color="#ff70ff" parts={[[OSC_A, "15,145 40,143 85,156 150,155 165,178 190,172 215,165 240,173 260,168 285,178 310,165 360,168 430,168 480,175 550,182 590,172 625,188 645,183 690,188 735,190 760,180 790,180 812,170 845,188 880,193 905,165 950,155 985,150 1050,142 1090,145 1125,165 1150,155 1175,130 1205,125 1230,145 1240,123 1270,122 1300,135 1325,155 1370,130 1400,150 1440,155 1475,158 1520,180 1535,170"], [OSC_B, "0,172 20,170 70,165 100,190 195,196 210,208 232,190 270,200 300,212 340,217 370,245 420,240 465,245 490,260 510,292 545,298 560,285 575,300 680,313 700,295 750,285 800,292 840,285 870,285 885,268 905,285 940,290 990,313 1030,300 1050,307 1085,312 1110,290 1150,285 1190,298 1225,318 1250,338 1300,340 1365,345 1420,322 1450,328 1495,330 1505,310 1555,310"]]} />
      <Curve color="#ff2a10" dash="3 2" parts={[[OSC_A, "15,135 100,145 160,150 200,162 280,170 360,170 460,172 620,175 700,182 800,186 900,180 960,170 1020,160 1110,153 1200,145 1290,135 1350,136 1410,135 1450,145 1490,150 1530,158"], [OSC_B, "0,160 100,172 200,188 300,196 400,220 500,248 560,268 650,295 710,300 860,290 960,290 1040,300 1110,308 1170,300 1230,305 1290,320 1340,330 1370,337 1450,335 1555,325"]]} />
      <Curve color="#fff" w={2} parts={[[OSC_A, "15,202 65,215 100,240 120,252 150,255 170,280 200,296 250,283 310,293 350,302 390,318 420,335 445,340 490,342 530,318 560,308 600,298 620,302 665,325 735,332 760,305 790,290 815,280 840,288 870,313 890,313 910,280 945,182 990,175 1030,158 1100,158 1145,177 1170,155 1200,140 1225,155 1255,160 1280,145 1305,155 1345,185 1370,180 1410,188 1440,220 1470,245 1495,247 1530,280"], [OSC_B, "0,295 20,303 60,295 80,285 95,285 120,310 165,330 200,343 230,330 265,313 290,318 330,338 380,350 410,350 450,335 480,335 510,348 560,350 640,345 680,335 720,308 760,298 870,292 900,272 940,275 1010,292 1050,278 1080,280 1095,290 1120,285 1150,262 1200,275 1260,308 1300,318 1360,298 1410,302 1440,280 1500,262 1530,225 1555,183"]]} />
      <Curve color="#ffff00" parts={[[OSC_A, "15,332 60,334 85,345 180,345 215,328 240,320 265,277 290,303 325,305 340,292 360,320 385,340 470,346 490,342 510,310 530,190 550,130 612,132 625,170 650,308 680,312 712,330 735,310 755,170 775,140 800,125 820,125 840,150 860,220 880,293 890,297 905,220 920,135 960,122 1030,124 1055,145 1070,195 1090,205 1110,290 1135,318 1150,290 1170,165 1200,143 1220,180 1240,190 1280,185 1300,235 1315,290 1340,318 1370,290 1400,300 1430,338 1445,343 1530,344"], [OSC_B, "0,342 40,333 55,315 75,248 88,240 110,300 145,330 210,343 260,323 290,330 330,343 560,345 610,325 680,330 700,280 720,190 740,140 760,130 785,145 805,175 825,190 850,165 872,180 885,142 900,138 915,150 940,180 960,230 980,310 1000,325 1020,305 1030,243 1045,255 1070,242 1095,290 1120,230 1150,170 1165,175 1185,235 1200,250 1225,320 1250,340 1310,344 1335,310 1352,235 1375,265 1405,245 1425,182 1445,200 1480,145 1500,145 1530,125 1555,122"]]} />
      <Curve color="#4169f0" parts={[[OSC_A, "15,328 80,343 200,343 240,337 320,310 350,300 385,300 410,325 440,342 490,342 520,320 555,250 590,165 615,148 640,152 665,175 690,210 720,290 735,312 760,285 790,235 830,160 850,150 885,175 905,172 930,155 990,145 1050,132 1090,142 1110,170 1150,290 1185,265 1210,233 1235,243 1270,190 1295,172 1325,205 1350,250 1385,312 1430,322 1480,342 1530,343"], [OSC_B, "0,343 40,345 90,320 200,314 260,340 480,343 620,342 680,333 700,290 730,180 755,153 810,140 870,140 900,147 930,155 970,170 1000,215 1030,240 1060,265 1090,300 1110,318 1125,290 1150,230 1185,207 1210,212 1245,285 1290,303 1340,335 1380,320 1415,295 1450,185 1485,155 1520,150 1555,135"]]} />
      {([[OSC_A, "415,305 435,330 455,340 475,338"], [OSC_A, "1513,312 1528,318"], [OSC_B, "162,313 190,330 212,328"], [OSC_B, "300,313 345,322 370,345 400,345 435,320"], [OSC_B, "465,313 490,325 505,345 545,345 568,322"], [OSC_B, "590,318 628,322"]] as Part[]).map((p, i) => (
        <Curve key={i} color="#ff0000" w={2} parts={[p]} />
      ))}
      <Crosshair y1={541} y2={624} />
    </>
  );
}

function Osc2() {
  return (
    <>
      <Levels ys={[639, 694]} dash="3 3" color="#b0b0b0" />
      <Curve color="#008a10" parts={[[OSC_A, "15,385 40,382 80,392 100,383 165,395 190,385 215,380 240,392 310,388 340,380 395,378 430,393 465,402 510,397 575,403 600,400 630,418 655,428 680,415 700,432 735,437 760,428 780,437 812,430 840,450 860,453 880,448 900,435 925,430 950,432 985,405 1010,402 1035,412 1065,422 1100,410 1130,408 1160,390 1200,383 1240,385 1275,382 1310,402 1345,402 1370,388 1420,402 1470,400 1500,415 1530,408"], [OSC_B, "0,408 65,405 100,435 200,440 240,425 265,428 290,445 330,437 380,467 420,468 460,480 490,483 510,505 540,510 558,495 580,508 630,502 690,500 750,488 790,508 830,500 880,502 910,517 950,525 985,553 1040,535 1095,545 1120,527 1150,528 1190,555 1215,560 1250,580 1310,583 1340,572 1365,588 1390,575 1425,565 1445,580 1500,568 1555,573"]]} />
      <Curve color="#e06a10" parts={[[OSC_A, "15,450 40,465 65,480 85,510 110,498 145,500 163,550 190,525 215,503 240,517 250,500 275,510 285,525 300,513 340,508 355,532 400,525 430,550 475,555 487,505 520,503 540,490 553,460 575,478 600,457 612,465 620,495 655,513 680,488 710,505 735,498 745,440 770,438 790,440 810,395 820,455 850,475 885,475 900,405 920,380 930,400 985,395 1010,380 1030,398 1060,410 1080,430 1100,445 1135,443 1155,425 1185,415 1205,418 1218,462 1240,440 1285,435 1310,480 1330,480 1370,463 1410,480 1425,515 1470,515 1495,525 1505,545 1530,540"], [OSC_B, "0,535 20,555 35,513 75,503 105,535 150,528 180,542 200,530 212,568 235,525 275,535 295,562 330,550 370,560 385,585 430,555 490,563 505,590 545,580 558,542 600,550 650,550 672,568 692,460 705,475 740,465 810,470 840,450 872,458 885,397 915,445 940,440 985,467 1020,450 1030,415 1042,462 1070,450 1090,470 1110,438 1145,432 1180,445 1215,460 1250,488 1310,485 1340,465 1365,480 1420,455 1450,465 1480,442 1500,455 1512,412 1535,398 1555,398"]]} />
      <Curve color="#fff" w={2} parts={[[OSC_A, "15,445 35,480 55,525 80,560 110,582 160,583 230,588 340,583 420,578 500,580 560,560 590,545 620,510 660,493 735,478 770,450 812,420 835,425 870,455 890,458 930,425 990,390 1030,377 1080,380 1150,398 1210,405 1245,425 1285,462 1305,470 1345,510 1415,513 1450,545 1490,565 1520,583"], [OSC_B, "0,585 100,586 200,583 330,583 430,590 680,587 705,575 750,535 810,480 850,410 880,385 950,382 980,390 1035,420 1100,495 1130,493 1155,485 1205,515 1255,550 1350,553 1370,567 1410,567 1440,555 1495,545 1520,510 1555,430"]]} />
      <Curve color="#ff0000" w={2} parts={[[OSC_A, "15,453 90,425 150,417 210,420 280,438 350,468 400,498 470,535 540,562 640,578 700,583 790,580 840,570 900,563 960,525 1030,460 1080,430 1150,405 1240,390 1320,381 1410,383 1490,403"], [OSC_B, "0,427 100,463 210,535 330,578 430,585 560,590 730,590 880,580 1080,555 1220,520 1350,497 1460,490 1555,490"]]} />
      <Crosshair y1={627} y2={706} />
    </>
  );
}

function Osc3() {
  const pink = "#ff1090";
  const azure = "#0a84ff";
  const peach = "#ffa040";
  const main: [string, string][] = [
    [pink, "12,42 20,70 32,75 48,110 60,130 75,175 83,232 102,233 110,265 135,266 145,283 170,284 178,292 215,292 245,297 425,298"],
    [azure, "425,298 430,263 450,262 460,230 475,200 482,198"],
    [pink, "482,198 490,245 510,248 517,275 548,275 555,287 580,287"],
    [peach, "580,287 588,270 598,285"],
    [pink, "598,285 615,285"],
    [azure, "615,285 632,253"],
    [pink, "632,253 640,277 668,278 675,290 702,290"],
    [azure, "702,290 717,258"],
    [pink, "717,258 728,277 755,277"],
    [peach, "755,277 763,265 772,285"],
    [pink, "772,285 780,283"],
    [peach, "780,283 790,268 798,285"],
    [pink, "798,285 830,290 870,297 930,298"],
    [azure, "930,298 935,263 962,263"],
    [pink, "962,263 970,280 1000,282 1010,290 1040,293 1110,298 1568,298"],
  ];
  return (
    <>
      <Levels ys={[727, 786]} dash="18 6" color="#707070" />
      <Curve color="#009a10" parts={[[LOW_A, "12,62 40,70 65,87 110,83 125,108 150,98 175,93 220,105 260,92 320,95 355,108 400,98 430,108 470,98 485,115 540,115 570,122 600,110 620,110 630,93 650,122 690,122 705,85 725,92 740,75 770,70 830,77 850,62 870,85 885,75 910,55 950,62 985,42 1020,62 1045,70 1065,48 1110,85 1165,87 1175,105 1215,110 1230,92 1270,95 1295,123 1360,135 1380,120 1410,122 1425,150 1470,153 1485,180 1520,190 1530,177"], [LOW_B, "0,192 15,215 30,243 60,243 65,230 75,245 130,255 152,265 165,230 185,240 210,230 260,237 290,222 308,228 317,207 335,235 380,243 390,262 430,243 440,262 460,255 475,270 495,237 530,233 550,247 575,255 590,280 620,293 650,293 665,285 690,297 720,290 735,272 765,283 790,277 800,260 838,258"]]} />
      <Curve color="#ff2a10" dash="3 2" parts={[[LOW_A, "12,65 120,78 200,98 340,98 480,106 600,115 690,115 740,98 830,75 900,77 1000,60 1095,60 1190,82 1270,95 1380,122 1470,135 1560,172"], [LOW_B, "0,178 80,215 160,247 240,240 340,228 390,240 470,253 560,247 630,268 700,290 780,283 835,272"]]} />
      <Curve color="#fff" parts={[[LOW_A, "12,285 30,283 60,297 150,297 185,270 200,230 212,220 222,252 250,255 265,235 278,275 300,290 385,292 397,260 410,140 425,65 432,48 455,52 475,48 485,75 500,200 515,255 540,275 555,285 570,270 578,190 590,100 610,60 630,42 645,55 660,100 672,180 682,240 692,243 700,130 712,60 730,44 805,44 825,80 835,135 848,140 860,220 880,270 895,240 910,150 925,80 937,62 950,110 980,128 995,115 1005,150 1020,235 1045,265 1070,237 1090,260 1110,290 1140,295 1225,292 1240,270 1255,190 1265,180 1280,240 1300,270 1335,290 1370,290 1410,277 1430,292"], [LOW_B, "0,295 70,293 105,273 130,278 150,295 160,285 172,220 185,130 198,75 215,53 240,62 255,108 265,100 275,118 300,93 308,110 318,72 328,57 345,90 365,130 380,200 392,262 403,278 418,265 430,180 440,195 455,180 465,185 482,235 495,200 515,110 528,95 540,110 555,180 570,215 585,280 605,293 650,293 665,270 682,173 698,210 720,185 735,112 752,135 768,100 788,60 798,68 820,43 838,43"]]} />
      <Curve color="#ff00ff" parts={[[LOW_A, "12,262 45,290 65,308 210,307 260,310 385,310 405,295 420,240 440,100 460,70 475,50 485,80 500,190 520,260 560,300 575,295 588,180 600,70 615,40 640,31 655,45 670,100 692,232 702,110 715,42 730,31 820,31 855,38 870,70 885,125 895,130 910,80 925,42 940,37 955,60 970,85 1000,65 1012,80 1025,170 1050,260 1072,238 1095,260 1120,308 1250,308 1265,298 1290,303 1560,310"], [LOW_B, "0,310 165,310 178,280 190,150 205,65 222,50 240,60 270,95 295,62 310,60 325,35 345,33 365,50 380,90 395,190 408,260 420,260 430,190 440,165 460,185 482,278 495,255 515,120 535,80 550,110 570,200 590,280 620,308 660,308 680,290 725,290 745,230 765,212 785,130 800,85 815,38 838,31"]]} />
      {main.map(([c, p], i) => <Curve key={i} color={c} w={3} parts={[[LOW_A, p]]} />)}
      <Curve color={pink} w={3} parts={[[LOW_B, "0,298 815,298"]]} />
      <Curve color={azure} w={3} parts={[[LOW_B, "815,298 820,268 832,258 838,230"]]} />
      <Curve color="#ffff00" dash="3 2" parts={[[LOW_A, "12,42 18,298 422,298 430,44 483,44 490,262 512,262 517,290 578,292 587,55 597,212 613,212 622,60 630,55 640,212 667,212 673,283 702,285 717,44 727,210 752,210 762,68 770,238 778,235 788,90 800,250 830,250 840,290 928,298 935,44 962,44 970,270 997,272 1005,295 1040,297 1560,298"], [LOW_B, "0,298 815,298 822,43 838,43"]]} />
      <Crosshair y1={709} y2={804} />
    </>
  );
}

const bullZones = [[179, 223], [264, 298], [320, 396], [411, 434], [440, 463], [795, 892], [915, 919], [948, 972], [1055, 1109]];
const strongRows: [number, number, string][] = [
  [5, 73, "r"], [74, 172, "r"], [186, 220, "g"], [227, 264, "r"], [264, 296, "g"], [303, 321, "r"], [321, 365, "g"], [399, 411, "r"], [415, 432, "g"], [451, 460, "g"], [464, 560, "r"],
  [661, 700, "r"], [727, 748, "r"], [795, 836, "g"], [839, 844, "g"], [848, 860, "g"], [864, 876, "g"], [894, 915, "r"], [916, 920, "g"], [921, 948, "r"], [948, 972, "g"], [972, 1018, "r"], [1068, 1108, "g"],
];

function Osc4() {
  return (
    <>
      <g shapeRendering="crispEdges">
        {Array.from({ length: 276 }, (_, i) => {
          const x = 5 + i * 4;
          const bull = bullZones.some(([a, b]) => x >= a && x < b);
          return <rect key={i} x={x} y={809} width={3} height={23} fill={bull ? "#004000" : "#640000"} />;
        })}
        {strongRows.map(([a, b, c]) => <line key={a} x1={a} x2={b} y1={824.5} y2={824.5} strokeWidth={5} strokeDasharray="3 1" stroke={c === "g" ? "#007800" : "#a00000"} />)}
      </g>
      <Curve color="#00ff00" parts={[[LOW_A, "12,360 40,368 65,378 115,380 135,391 170,383 205,373 300,374 340,385 375,390 430,357 480,350 515,367 570,367 585,353 620,345 635,335 655,350 690,358 715,333 800,328 830,335 875,350 935,340 955,348 1015,347 1045,358 1100,362 1150,380 1215,388 1255,368 1350,378 1410,385 1450,378 1495,397 1560,390"], [LOW_B, "0,390 40,398 60,395 90,385 160,383 190,358 220,352 310,350 325,340 385,352 395,362 430,355 490,362 570,355 600,370 650,375 690,367 730,363 790,355 838,330"]]} />
      <Curve color="#ff00ff" parts={[[LOW_A, "12,355 50,363 115,377 150,386 230,375 300,376 350,383 400,380 440,362 485,352 530,364 575,365 600,352 635,338 660,348 695,355 720,338 760,334 825,330 870,343 935,343 1010,346 1045,354 1110,358 1150,373 1215,386 1255,372 1340,371 1410,380 1490,382 1530,396 1560,392"], [LOW_B, "0,392 65,396 90,388 155,387 190,362 310,353 335,342 380,347 400,357 490,360 570,354 610,368 660,373 690,367 740,366 800,352 838,335"]]} />
    </>
  );
}

const times = ["30 May 2022", "2 Jun 04:00", "6 Jun 20:00", "9 Jun 12:00", "14 Jun 04:00", "16 Jun 20:00", "21 Jun 12:00", "24 Jun 04:00", "28 Jun 20:00", "1 Jul 12:00", "6 Jul 04:00", "8 Jul 20:00", "13 Jul 12:00", "18 Jul 04:00", "20 Jul 20:00", "25 Jul 12:00", "28 Jul 04:00", "2 Aug 20:00"];

export default function App() {
  return (
    <main className={`${TAHOMA} flex min-h-screen flex-col bg-[#d4d4d4] text-[11px] leading-[14px] text-black`}>
      <MenuBar />
      <Toolbars />
      <div className="mr-[2px] border-t-2 border-l-2 border-[#505050] bg-black pt-[2px] pl-[2px]">
        <div className="flex flex-col gap-px">
          <Pane
            top={77}
            cls="h-[429px]"
            ticks={[[106, "1.36995"], [139, "1.36365"], [172, "1.35750"], [205, "1.35120"], [238, "1.34490"], [271, "1.33875"], [304, "1.33245"], [337, "1.32615"], [370, "1.32000"], [403, "1.31370"], [436, "1.30740"], [502, "1.29495"]]}
            overlay={<ChartOverlay />}
          >
            <PriceChart />
          </Pane>
          <Pane top={507} cls="h-[32px]" ticks={[[514, "2"], [531, "1"]]} overlay={<SymbolStrip />} />
          <Pane top={540} cls="h-[85px]" ticks={[[547, "2"], [554, "85"], [611, "15"], [617, "1"]]} overlay={<HeatMap />}>
            <Osc1 />
          </Pane>
          <Pane top={626} cls="h-[81px]" ticks={[[632, "2"], [639, "85"], [694, "15"], [700, "1"]]}>
            <Osc2 />
          </Pane>
          <Pane top={708} cls="h-[97px]" ticks={[[715, "2"], [727, "85"], [786, "15"], [797, "1"]]}>
            <Osc3 />
          </Pane>
          <Pane
            top={806}
            cls="h-[29px]"
            ticks={[[813, "2"], [827, "1"]]}
            overlay={<button className={`${TAHOMA} absolute top-0 right-[5px] h-[15px] w-10 rounded-sm border border-[#ff1090] bg-[#101070] text-[9px] leading-[12px] whitespace-nowrap text-[#00ffff]`}>RSI HTF</button>}
          >
            <Osc4 />
          </Pane>
        </div>
        <div className="relative flex h-[20px] overflow-hidden text-[9px] leading-[12px] whitespace-nowrap text-[#708090]">
          {times.map((t) => (
            <span key={t} className="w-16 shrink-0">
              <span className="ml-px block h-[3px] w-px bg-[#708090]" />
              {t}
            </span>
          ))}
          <span className="absolute top-[3px] left-[1030px] h-[12px] w-[78px] bg-[#ff00ff] text-center text-black">2022.08.01 00:00</span>
        </div>
      </div>
      <nav className="mt-[2px] flex h-[21px] items-start border-t border-black pl-px text-[#444]">
        <button className="h-[18px] w-[85px] border-r border-[#606060] pl-[3px]">GBPAUD,H4</button>
        <button className="h-[18px] w-[80px]">USDCHF,H1</button>
        <button className="-mt-px h-[19px] w-[80px] border-x border-b border-black bg-white text-black">EURCAD,H4</button>
        <span className="ml-auto flex gap-3 self-center pr-2">
          <span className="border-y-4 border-r-4 border-y-transparent border-r-[#a0a0a0]" />
          <span className="border-y-4 border-l-4 border-y-transparent border-l-[#a0a0a0]" />
        </span>
      </nav>
      <footer className="flex flex-1 items-center border-t border-white pt-[2px] pl-[2px] whitespace-nowrap">
        <span className="flex-1">For Help, press F1</span>
        {[["NMTB", "w-[109px]"], ["2022.08.01 00:00", "w-[101px]"], ["O: 1.30803", "w-[72px]"], ["H: 1.30989", "w-[71px]"], ["L: 1.30701", "w-[69px]"], ["C: 1.30883", "w-[71px]"], ["V: 8774", "w-[66px]"]].map(([t, w]) => (
          <span key={t} className={`${w} border-l border-[#808080] py-[2px] pl-1`}>{t}</span>
        ))}
        <span className="flex w-[139px] items-center gap-[3px] border-l border-[#808080] py-[2px] pl-[5px]">
          <svg width="24" height="14" aria-hidden="true">
            {Array.from({ length: 8 }, (_, i) => (
              <g key={i}>
                <rect x={i * 3} y={0} width={2} height={9 - i} fill="#4a7a00" />
                <rect x={i * 3} y={10 - i} width={2} height={4 + i} fill="#003a5a" />
              </g>
            ))}
          </svg>
          7761/13 kb
          <svg className="-mb-1 ml-auto" width="15" height="15" aria-hidden="true"><path d="M1 15L15 1M6 15l9-9M11 15l4-4" stroke="#808080" strokeWidth="2" /></svg>
        </span>
      </footer>
    </main>
  );
}
